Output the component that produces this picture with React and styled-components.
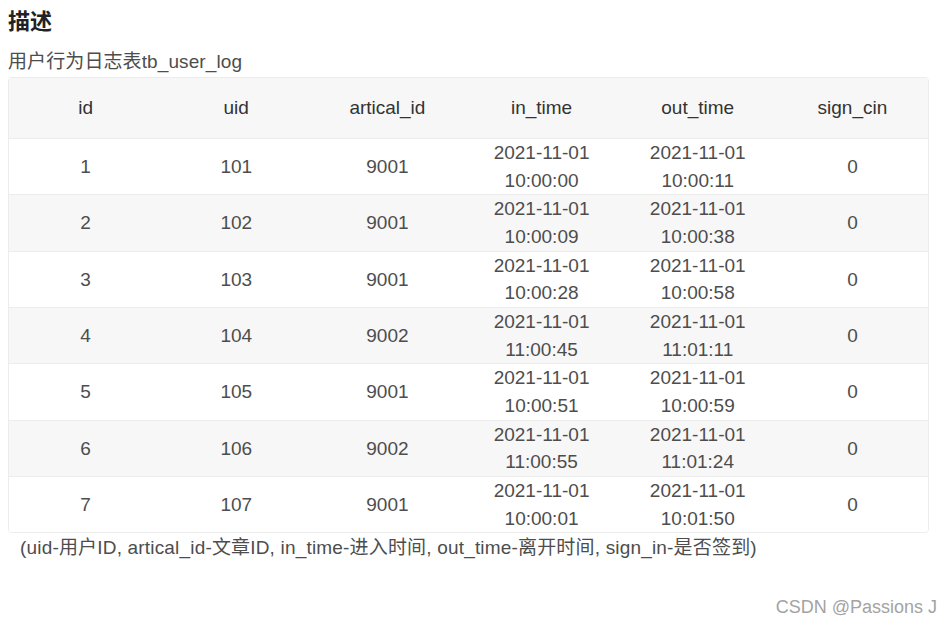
import React from "react";
import styled, { createGlobalStyle } from "styled-components";

const GlobalStyle = createGlobalStyle`
  html, body {
    margin: 0;
    padding: 0;
    background: #fff;
  }
  body {
    font-family: "Liberation Sans", Arial, "Noto Sans CJK SC", sans-serif;
    color: #4d4d4d;
  }
`;

const Page = styled.div`
  position: relative;
  width: 952px;
  height: 624px;
  padding: 7px 24px 0 8px;
  box-sizing: border-box;
  overflow: hidden;
`;

const Title = styled.h3`
  margin: 0;
  font-size: 22px;
  line-height: 30px;
  font-weight: bold;
  color: #222;
`;

const Desc = styled.p`
  margin: 11px 0 1px;
  font-size: 19px;
  line-height: 28px;
  letter-spacing: 0.1px;
  color: #4d4d4d;
`;

const Table = styled.div`
  box-sizing: border-box;
  width: 921px;
  border: 1px solid #ececec;
  border-radius: 4px;
  overflow: hidden;
  font-size: 19px;
`;

const Row = styled.div`
  display: grid;
  grid-template-columns: 153fr 148fr 154fr 154fr 158fr 151fr;
  align-items: center;
  background: ${(p) => (p.$shade ? "#f7f7f7" : "#fff")};
  border-top: ${(p) => (p.$first ? "none" : "1px solid #ececec")};
  min-height: ${(p) => (p.$head ? "60px" : "55.33px")};
`;

const Cell = styled.div`
  text-align: center;
  line-height: 27.67px;
  color: ${(p) => (p.$head ? "#333" : "#4d4d4d")};
`;

const Caption = styled.p`
  margin: 1px 0 0;
  padding-left: 12px;
  font-size: 19px;
  line-height: 28px;
  letter-spacing: 0.18px;
  color: #4d4d4d;
`;

const Watermark = styled.div`
  position: absolute;
  right: 15px;
  bottom: 6px;
  font-size: 18px;
  color: #a3a3a3;
`;

const columns = ["id", "uid", "artical_id", "in_time", "out_time", "sign_cin"];

const rows = [
  [1, 101, 9001, "10:00:00", "10:00:11", 0],
  [2, 102, 9001, "10:00:09", "10:00:38", 0],
  [3, 103, 9001, "10:00:28", "10:00:58", 0],
  [4, 104, 9002, "11:00:45", "11:01:11", 0],
  [5, 105, 9001, "10:00:51", "10:00:59", 0],
  [6, 106, 9002, "11:00:55", "11:01:24", 0],
  [7, 107, 9001, "10:00:01", "10:01:50", 0],
];

const day = "2021-11-01";

export default function App() {
  return (
    <>
      <GlobalStyle />
      <Page>
        <Title>描述</Title>
        <Desc>用户行为日志表tb_user_log</Desc>
        <Table>
          <Row $head $shade $first>
            {columns.map((c) => (
              <Cell $head key={c}>
                {c}
              </Cell>
            ))}
          </Row>
          {rows.map((r, i) => (
            <Row key={r[0]} $shade={i % 2 === 1}>
              <Cell>{r[0]}</Cell>
              <Cell>{r[1]}</Cell>
              <Cell>{r[2]}</Cell>
              <Cell>
                {day}
                <br />
                {r[3]}
              </Cell>
              <Cell>
                {day}
                <br />
                {r[4]}
              </Cell>
              <Cell>{r[5]}</Cell>
            </Row>
          ))}
        </Table>
        <Caption>
          (uid-用户ID, artical_id-文章ID, in_time-进入时间, out_time-离开时间, sign_in-是否签到)
        </Caption>
        <Watermark>CSDN @Passions J</Watermark>
      </Page>
    </>
  );
}
